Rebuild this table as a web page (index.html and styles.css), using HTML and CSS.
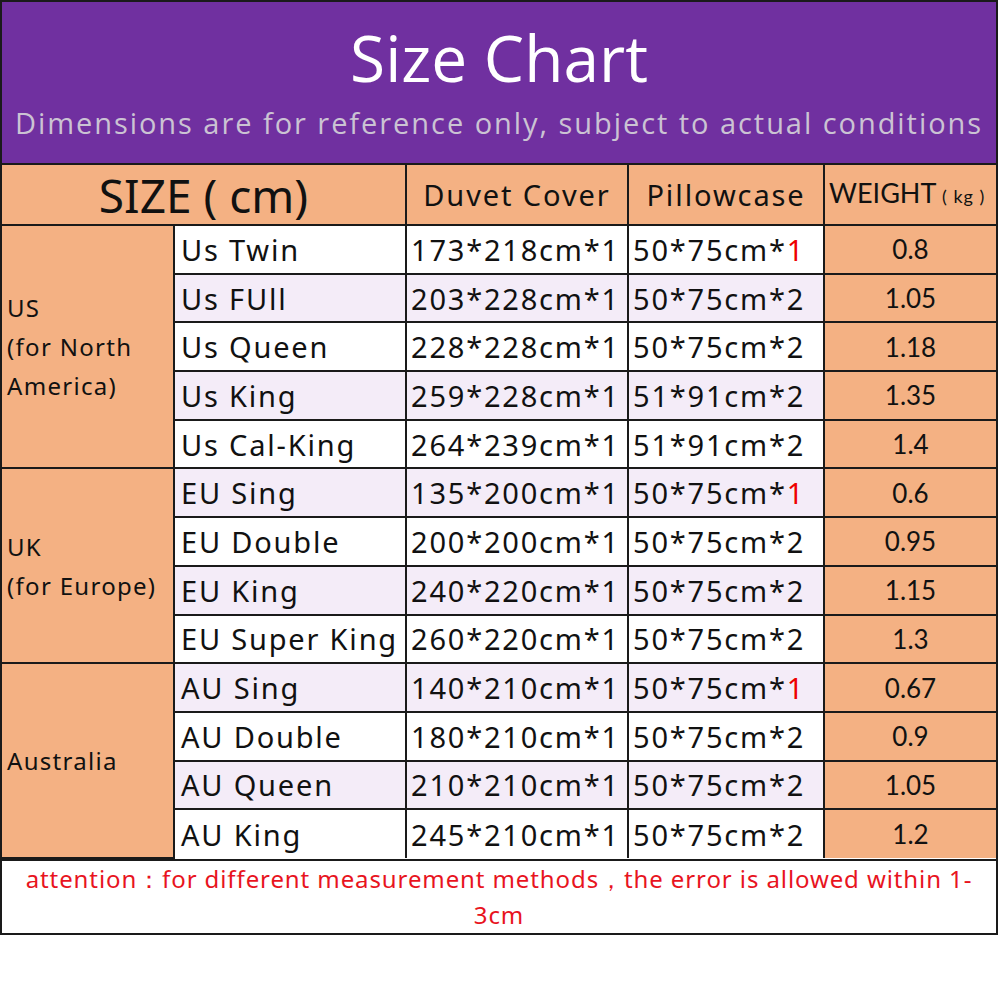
FILE: index.html
```html
<!DOCTYPE html>
<html>
<head>
<meta charset="utf-8">
<link rel="stylesheet" href="styles.css">
</head>
<body>
<div class="chart">
  <div class="banner">
    <h1 class="title">Size Chart</h1>
    <p class="subtitle">Dimensions are for reference only, subject to actual conditions</p>
  </div>
  <table class="grid">
    <colgroup>
      <col class="c-region"><col class="c-name"><col class="c-duvet"><col class="c-pillow"><col class="c-weight">
    </colgroup>
    <thead>
      <tr class="head">
        <th colspan="2" class="h-size">SIZE ( cm)</th>
        <th class="h-col">Duvet Cover</th>
        <th class="h-col">Pillowcase</th>
        <th class="h-weight">WEIGHT<span class="unit"> ( kg )</span></th>
      </tr>
    </thead>
    <tbody>
      <tr class="odd"><td rowspan="5" class="region">US<br>(for North<br>America)</td><td class="name">Us Twin</td><td class="val">173*218cm*1</td><td class="val">50*75cm*<span class="red">1</span></td><td class="w">0.8</td></tr>
      <tr class="even"><td class="name">Us FUll</td><td class="val">203*228cm*1</td><td class="val">50*75cm*2</td><td class="w">1.05</td></tr>
      <tr class="odd"><td class="name">Us Queen</td><td class="val">228*228cm*1</td><td class="val">50*75cm*2</td><td class="w">1.18</td></tr>
      <tr class="even"><td class="name">Us King</td><td class="val">259*228cm*1</td><td class="val">51*91cm*2</td><td class="w">1.35</td></tr>
      <tr class="odd"><td class="name">Us Cal-King</td><td class="val">264*239cm*1</td><td class="val">51*91cm*2</td><td class="w">1.4</td></tr>
      <tr class="even"><td rowspan="4" class="region">UK<br>(for Europe)</td><td class="name">EU Sing</td><td class="val">135*200cm*1</td><td class="val">50*75cm*<span class="red">1</span></td><td class="w">0.6</td></tr>
      <tr class="odd"><td class="name">EU Double</td><td class="val">200*200cm*1</td><td class="val">50*75cm*2</td><td class="w">0.95</td></tr>
      <tr class="even"><td class="name">EU King</td><td class="val">240*220cm*1</td><td class="val">50*75cm*2</td><td class="w">1.15</td></tr>
      <tr class="odd"><td class="name">EU Super King</td><td class="val">260*220cm*1</td><td class="val">50*75cm*2</td><td class="w">1.3</td></tr>
      <tr class="even"><td rowspan="4" class="region">Australia</td><td class="name">AU Sing</td><td class="val">140*210cm*1</td><td class="val">50*75cm*<span class="red">1</span></td><td class="w">0.67</td></tr>
      <tr class="odd"><td class="name">AU Double</td><td class="val">180*210cm*1</td><td class="val">50*75cm*2</td><td class="w">0.9</td></tr>
      <tr class="even"><td class="name">AU Queen</td><td class="val">210*210cm*1</td><td class="val">50*75cm*2</td><td class="w">1.05</td></tr>
      <tr class="odd"><td class="name">AU King</td><td class="val">245*210cm*1</td><td class="val">50*75cm*2</td><td class="w">1.2</td></tr>
    </tbody>
  </table>
  <div class="note">attention：for different measurement methods，the error is allowed within 1-<br>3cm</div>
</div>
</body>
</html>
```

FILE: styles.css
```css
html, body {
  margin: 0;
  padding: 0;
  background: #ffffff;
}

.chart {
  width: 998px;
  box-sizing: border-box;
  border: 2px solid #1a1a1a;
  font-family: "Noto Sans", "Open Sans", sans-serif;
  color: #111;
}

.banner {
  background: #7030a0;
  height: 161px;
  box-sizing: border-box;
  display: flex;
  flex-direction: column;
  align-items: center;
  padding-top: 16px;
}

.title {
  margin: 0;
  font-family: "Open Sans", "Noto Sans", sans-serif;
  font-weight: 400;
  font-size: 64px;
  line-height: 80px;
  color: #ffffff;
}

.subtitle {
  margin: 0;
  font-family: "Open Sans", "Noto Sans", sans-serif;
  font-size: 29px;
  letter-spacing: 1.95px;
  line-height: 50px;
  color: #cbc3d3;
  white-space: nowrap;
}

.grid {
  width: 100%;
  border-collapse: collapse;
  table-layout: fixed;
}

.c-region { width: 172px; }
.c-name { width: 232px; }
.c-duvet { width: 222px; }
.c-pillow { width: 196px; }
.c-weight { width: auto; }

.grid th, .grid td {
  border: 2px solid #1a1a1a;
  padding: 0;
  height: 48.7px;
  box-sizing: border-box;
  overflow: hidden;
  white-space: nowrap;
}

.grid th:first-child, .grid td.region { border-left: none; }
.grid th:last-child, .grid td.w { border-right: none; }
.grid tbody tr:last-child td { border-bottom: none; }

.head th {
  background: #f4b183;
  height: 61px;
  line-height: 40px;
  font-weight: 400;
}

.h-size {
  font-size: 46px;
  text-align: center;
}

.h-col {
  font-size: 29px;
  letter-spacing: 1.9px;
  text-align: center;
}

.h-weight {
  font-family: "Lato", "Noto Sans", sans-serif;
  font-size: 27px;
  text-align: left;
  padding-left: 4px !important;
}

.unit {
  font-size: 18px;
  letter-spacing: 1px;
}

.region {
  background: #f4b183;
  font-size: 24px;
  letter-spacing: 1.3px;
  line-height: 39px;
  padding-left: 5px !important;
  vertical-align: middle;
  white-space: normal;
}

.name, .val {
  font-size: 29px;
  letter-spacing: 1.8px;
  padding-left: 6px !important;
}

.val {
  padding-left: 4px !important;
}

.odd .name, .odd .val { background: #ffffff; }
.even .name, .even .val { background: #f4ecf8; }

.w {
  background: #f4b183;
  font-family: "Lato", "Noto Sans", sans-serif;
  font-size: 26px;
  text-align: center;
}

.red { color: #ee0000; }

.note {
  border-top: 2px solid #1a1a1a;
  text-align: center;
  color: #e8141e;
  font-size: 24px;
  letter-spacing: 0.9px;
  line-height: 36px;
  padding: 0;
}
```
